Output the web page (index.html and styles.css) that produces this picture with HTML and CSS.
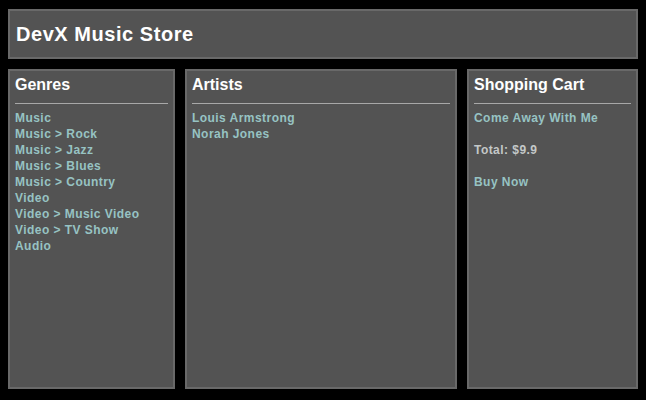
FILE: index.html
```html
<!DOCTYPE html>
<html>
<head>
<meta charset="utf-8">
<title>DevX Music Store</title>
<link rel="stylesheet" href="styles.css">
</head>
<body>
<header class="masthead">
  <h1 class="site-title">DevX Music Store</h1>
</header>
<main class="columns">
  <section class="panel">
    <h2 class="panel-title">Genres</h2>
    <ul class="link-list">
      <li><a href="#">Music</a></li>
      <li><a href="#">Music &gt; Rock</a></li>
      <li><a href="#">Music &gt; Jazz</a></li>
      <li><a href="#">Music &gt; Blues</a></li>
      <li><a href="#">Music &gt; Country</a></li>
      <li><a href="#">Video</a></li>
      <li><a href="#">Video &gt; Music Video</a></li>
      <li><a href="#">Video &gt; TV Show</a></li>
      <li><a href="#">Audio</a></li>
    </ul>
  </section>
  <section class="panel">
    <h2 class="panel-title">Artists</h2>
    <ul class="link-list">
      <li><a href="#">Louis Armstrong</a></li>
      <li><a href="#">Norah Jones</a></li>
    </ul>
  </section>
  <section class="panel">
    <h2 class="panel-title">Shopping Cart</h2>
    <div class="cart">
      <p class="cart-line"><a href="#">Come Away With Me</a></p>
      <p class="cart-line cart-total">Total: $9.9</p>
      <p class="cart-line"><a href="#">Buy Now</a></p>
    </div>
  </section>
</main>
</body>
</html>
```

FILE: styles.css
```css
html, body {
  background: #000;
}
body {
  margin: 9px 8px 0 8px;
  font-family: "Liberation Sans", Arial, sans-serif;
  color: #fff;
}
.masthead {
  box-sizing: border-box;
  height: 50px;
  background: #535353;
  border: 2px solid #696969;
  padding: 0 6px;
  display: flex;
  align-items: center;
}
.site-title {
  margin: 0;
  font-size: 20px;
  font-weight: bold;
  letter-spacing: 0.55px;
  color: #fff;
}
.columns {
  display: grid;
  grid-template-columns: 167px 1fr 171px;
  gap: 10px;
  margin-top: 10px;
  height: 320px;
}
.panel {
  box-sizing: border-box;
  background: #535353;
  border: 2px solid #696969;
  padding: 5px 5px;
}
.panel-title {
  margin: 0;
  font-size: 16px;
  line-height: 18px;
  font-weight: bold;
  color: #fff;
  padding-bottom: 9px;
  border-bottom: 1px solid #a8a8a8;
}
.link-list {
  list-style: none;
  margin: 6px 0 0 0;
  padding: 0;
}
.link-list li,
.cart-line {
  font-size: 12px;
  line-height: 16px;
  font-weight: bold;
  letter-spacing: 0.45px;
}
a {
  color: #97c3c3;
  text-decoration: none;
}
.cart {
  margin-top: 6px;
}
.cart-line {
  margin: 0 0 16px 0;
}
.cart-total {
  color: #c4c8c8;
}
```
